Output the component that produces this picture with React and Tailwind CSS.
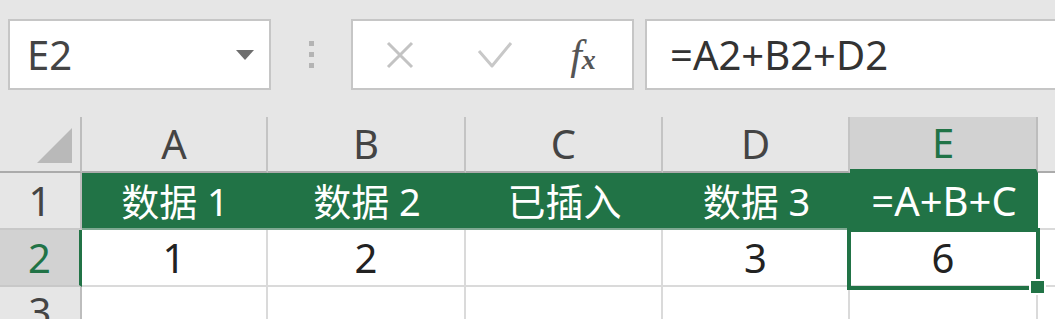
import React from 'react';

// column widths include the 2px grid line on the right
const COLS = [
    { key: 'A', w: 'w-[186px]', head: '数据 1', val: '1' },
    { key: 'B', w: 'w-[198px]', head: '数据 2', val: '2' },
    { key: 'C', w: 'w-[197px]', head: '已插入', val: '' },
    { key: 'D', w: 'w-[187px]', head: '数据 3', val: '3' },
    { key: 'E', w: 'w-[188px]', head: '=A+B+C', val: '6', selected: true },
];

function FormulaBar() {
    return (
        <div className="flex items-start h-[117px] pt-[19px] pl-2">
            {/* Name box */}
            <div className="shrink-0 flex items-center justify-between w-[263px] h-[71px] bg-white border-2 border-[#c6c6c6] pl-[17px] pr-[15px]">
                <span className="text-[40px] leading-none text-[#444]">E2</span>
                <svg width="18" height="10" viewBox="0 0 18 10">
                    <polygon points="0,0 18,0 9,10" fill="#6e6e6e" />
                </svg>
            </div>

            {/* Grip dots */}
            <div className="shrink-0 flex flex-col items-center justify-center gap-[6px] w-[80px] h-[71px]">
                <div className="w-[5px] h-[5px] bg-[#b4b4b4]"></div>
                <div className="w-[5px] h-[5px] bg-[#b4b4b4]"></div>
                <div className="w-[5px] h-[5px] bg-[#b4b4b4]"></div>
            </div>

            {/* Cancel / Enter / fx */}
            <div className="shrink-0 flex items-center w-[283px] h-[71px] bg-white border-2 border-[#c6c6c6]">
                <div className="flex items-center justify-center w-[94px]">
                    <svg width="28" height="28" viewBox="0 0 28 28">
                        <path d="M2 2 L26 26 M26 2 L2 26" stroke="#c3c3c3" strokeWidth="3" fill="none" />
                    </svg>
                </div>
                <div className="flex items-center justify-center w-[95px]">
                    <svg width="36" height="30" viewBox="0 0 36 30">
                        <path d="M2 11 L15 26 L34 3" stroke="#c8c8c8" strokeWidth="3" fill="none" strokeLinejoin="round" />
                    </svg>
                </div>
                <div className="flex items-center justify-center flex-1 pr-2">
                    <span className="font-['Liberation_Serif',serif] italic text-[#555] leading-none">
                        <span className="text-[42px]">f</span>
                        <span className="text-[28px] font-bold">x</span>
                    </span>
                </div>
            </div>

            {/* Formula */}
            <div className="shrink-0 flex items-center ml-[11px] w-[440px] h-[71px] bg-white border-2 border-[#c6c6c6] pl-[23px]">
                <span className="text-[40px] leading-none text-[#333]">=A2+B2+D2</span>
            </div>
        </div>
    );
}

export default function App() {
    return (
        <div className="w-[1055px] h-[319px] overflow-hidden bg-[#e6e6e6] font-['Noto_Sans','Noto_Sans_CJK_SC',sans-serif]">
            <FormulaBar />

            {/* Column headers */}
            <div className="flex h-[56px]">
                <div className="shrink-0 w-[82px] border-r-2 border-b-2 border-r-[#bdbdbd] border-b-[#ababab]">
                    <svg width="80" height="54" viewBox="0 0 80 54">
                        <polygon points="37,46 72,46 72,11" fill="#b9b9b9" />
                    </svg>
                </div>
                {COLS.map(c => (
                    <div
                        key={c.key}
                        className={
                            c.selected
                                ? `${c.w} shrink-0 flex items-center justify-center bg-[#d2d2d2] border-r-2 border-r-[#bdbdbd] border-b-4 border-b-[#217346] text-[40px] leading-none text-[#217346]`
                                : `${c.w} shrink-0 flex items-center justify-center border-r-2 border-r-[#c4c4c4] border-b-2 border-b-[#ababab] text-[40px] leading-none text-[#444]`
                        }
                    >
                        {c.key}
                    </div>
                ))}
                <div className="flex-1 border-b-2 border-b-[#ababab]"></div>
            </div>

            {/* Row 1 */}
            <div className="flex h-[57px]">
                <div className="shrink-0 w-[82px] flex items-center justify-center border-r-2 border-b-2 border-r-[#bdbdbd] border-b-[#c8c8c8] text-[40px] leading-none text-[#444]">
                    1
                </div>
                {COLS.map(c => (
                    <div
                        key={c.key}
                        className={`${c.w} shrink-0 flex items-center justify-center bg-[#217346] border-b-2 border-b-[#7fa992] leading-none text-white whitespace-nowrap ${c.selected ? 'text-[40px]' : 'text-[38px]'}`}
                    >
                        {c.head}
                    </div>
                ))}
                <div className="flex-1 bg-white border-b-2 border-b-[#dadada]"></div>
            </div>

            {/* Row 2 */}
            <div className="flex h-[57px]">
                <div className="shrink-0 w-[82px] flex items-center justify-center bg-[#d2d2d2] border-r-[3px] border-b-2 border-r-[#217346] border-b-[#c8c8c8] text-[40px] leading-none text-[#217346]">
                    2
                </div>
                {COLS.map(c => (
                    <div
                        key={c.key}
                        className={`${c.w} shrink-0 relative flex items-center justify-center bg-white border-r-2 border-b-2 border-[#dadada] text-[40px] leading-none text-[#222]`}
                    >
                        {c.val}
                        {c.selected && (
                            <>
                                <div className="absolute z-10 -left-[3px] -top-[2px] -right-[4px] -bottom-[5px] border-4 border-[#217346]"></div>
                                <div className="absolute z-20 -right-[10px] -bottom-[10px] w-[17px] h-[16px] bg-[#217346] border-2 border-white"></div>
                            </>
                        )}
                    </div>
                ))}
                <div className="flex-1 bg-white border-b-2 border-b-[#dadada]"></div>
            </div>

            {/* Row 3 */}
            <div className="flex h-[40px]">
                <div className="shrink-0 w-[82px] flex justify-center pt-[5px] border-r-2 border-r-[#bdbdbd] text-[40px] leading-none text-[#444]">
                    3
                </div>
                {COLS.map(c => (
                    <div key={c.key} className={`${c.w} shrink-0 bg-white border-r-2 border-[#dadada]`}></div>
                ))}
                <div className="flex-1 bg-white"></div>
            </div>
        </div>
    );
}
